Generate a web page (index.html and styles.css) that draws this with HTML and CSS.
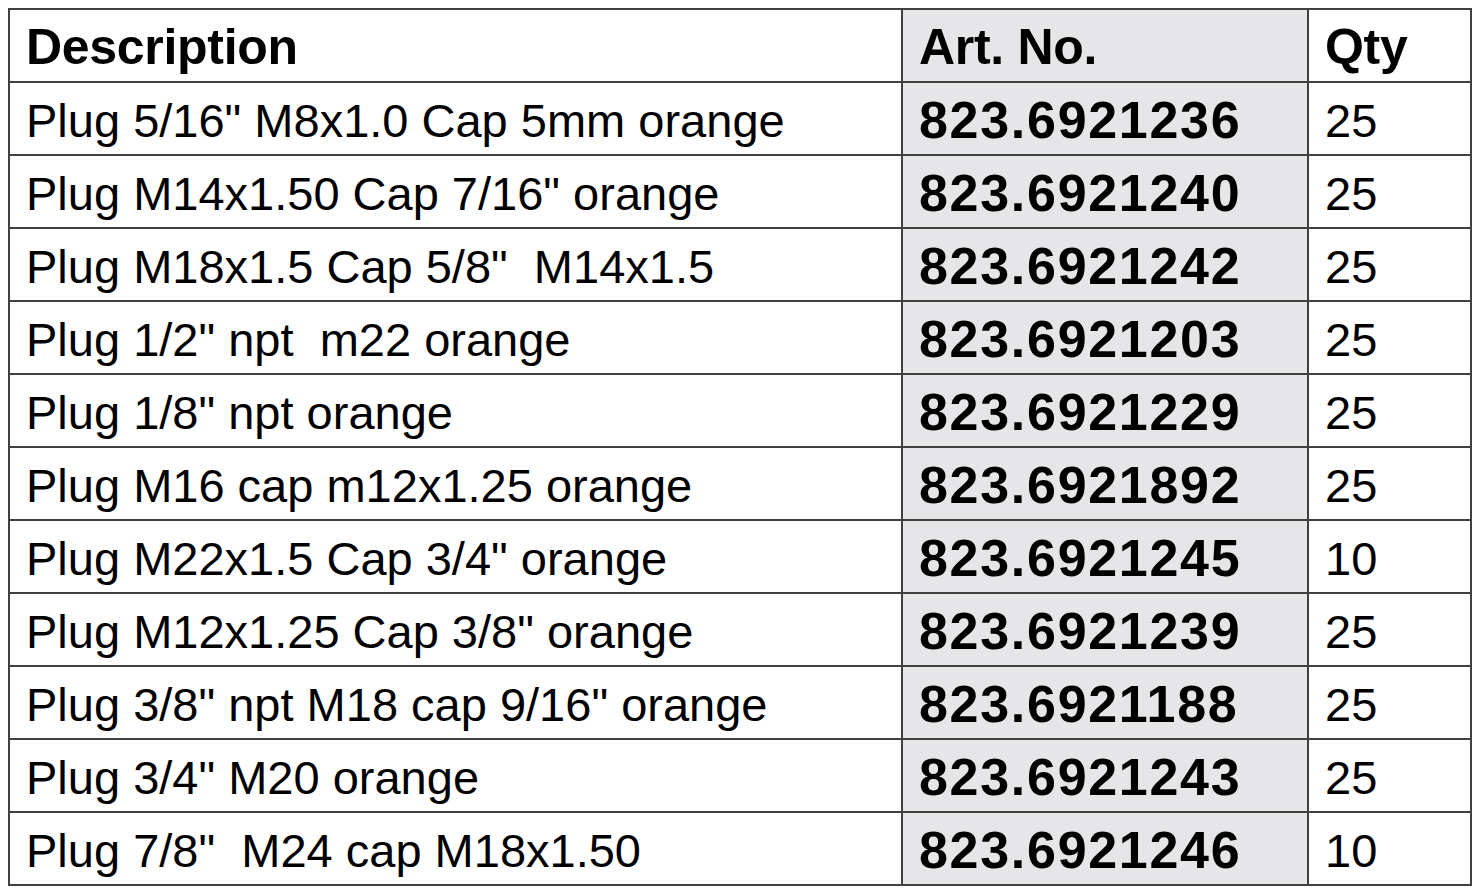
FILE: index.html
```html
<!DOCTYPE html>
<html>
<head>
<meta charset="utf-8">
<link rel="stylesheet" href="styles.css">
</head>
<body class="page">
<table class="parts">
  <colgroup>
    <col class="c-desc">
    <col class="c-art">
    <col class="c-qty">
  </colgroup>
  <thead>
    <tr>
      <th class="desc">Description</th>
      <th class="art">Art. No.</th>
      <th class="qty">Qty</th>
    </tr>
  </thead>
  <tbody>
    <tr><td class="desc">Plug 5/16" M8x1.0 Cap 5mm orange</td><td class="art">823.6921236</td><td class="qty">25</td></tr>
    <tr><td class="desc">Plug M14x1.50 Cap 7/16" orange</td><td class="art">823.6921240</td><td class="qty">25</td></tr>
    <tr><td class="desc">Plug M18x1.5 Cap 5/8"&nbsp; M14x1.5</td><td class="art">823.6921242</td><td class="qty">25</td></tr>
    <tr><td class="desc">Plug 1/2" npt&nbsp; m22 orange</td><td class="art">823.6921203</td><td class="qty">25</td></tr>
    <tr><td class="desc">Plug 1/8" npt orange</td><td class="art">823.6921229</td><td class="qty">25</td></tr>
    <tr><td class="desc">Plug M16 cap m12x1.25 orange</td><td class="art">823.6921892</td><td class="qty">25</td></tr>
    <tr><td class="desc">Plug M22x1.5 Cap 3/4" orange</td><td class="art">823.6921245</td><td class="qty">10</td></tr>
    <tr><td class="desc">Plug M12x1.25 Cap 3/8" orange</td><td class="art">823.6921239</td><td class="qty">25</td></tr>
    <tr><td class="desc">Plug 3/8" npt M18 cap 9/16" orange</td><td class="art">823.6921188</td><td class="qty">25</td></tr>
    <tr><td class="desc">Plug 3/4" M20 orange</td><td class="art">823.6921243</td><td class="qty">25</td></tr>
    <tr><td class="desc">Plug 7/8"&nbsp; M24 cap M18x1.50</td><td class="art">823.6921246</td><td class="qty">10</td></tr>
  </tbody>
</table>
</body>
</html>
```

FILE: styles.css
```css
html, body {
  margin: 0;
  padding: 0;
  background: #ffffff;
}
.page {
  padding: 8px;
  font-family: "Liberation Sans", Arial, sans-serif;
  color: #000;
}
.parts {
  border-collapse: collapse;
  table-layout: fixed;
  width: 1462px;
}
.c-desc { width: 893px; }
.c-art { width: 406px; }
.c-qty { width: 163px; }
.parts th, .parts td {
  border: 2px solid #404040;
  height: 68px;
  padding: 3px 0 0 16px;
  text-align: left;
  vertical-align: middle;
  white-space: nowrap;
  overflow: hidden;
  line-height: 1;
}
.parts th {
  font-weight: bold;
  font-size: 50px;
  letter-spacing: -0.3px;
}
.parts td {
  font-size: 47px;
  font-weight: normal;
}
.parts .art {
  background: #e6e6e8;
}
.parts td.art {
  font-weight: bold;
  font-size: 52px;
  letter-spacing: 1.7px;
}
```
